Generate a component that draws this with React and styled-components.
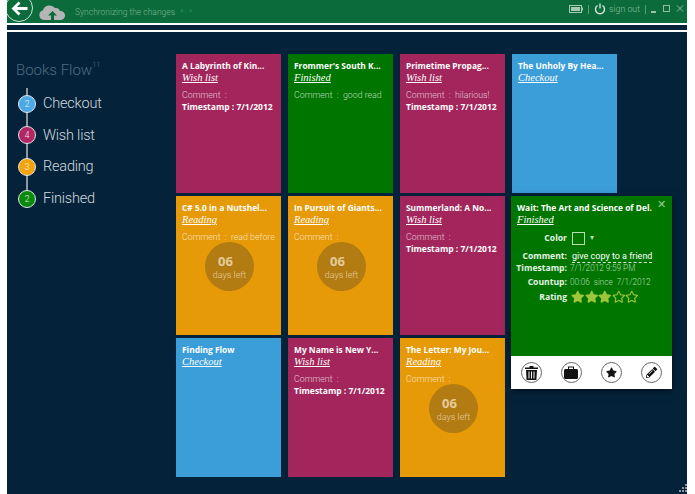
import React from 'react';
import styled, { createGlobalStyle } from 'styled-components';
import { FaStar, FaPencilAlt, FaRegStar } from 'react-icons/fa';

const Global = createGlobalStyle`
  html, body { margin: 0; padding: 0; background: #fff; overflow: hidden; }
  body { font-family: Roboto, "Open Sans", sans-serif; }
`;
const Page = styled.div`
  width: 695px; height: 494px; box-sizing: border-box; padding: 0 8px 0 7px;
  display: flex; flex-direction: column; position: relative; overflow: hidden;
`;
const Top = styled.header`
  height: 23px; background: #0b6b3a; display: flex; align-items: flex-start; flex: none; color: #7fb595; overflow: hidden;
`;
const Back = styled.div`
  width: 26px; height: 26px; border-radius: 50%; border: 1px solid #cfe3d6; margin: -6px 0 0 -2px;
  display: flex; align-items: center; justify-content: center; flex: none;
`;
const Cloud = styled.svg` margin: 5px 0 0 6px; flex: none; `;
const Sync = styled.span`
  font-size: 8.500px; line-height: 14px; margin: 5px 0 0 9px; color: #7db394; font-weight: 300;
`;
const Dots = styled.span` font-size: 10px; line-height: 14px; margin: 5px 0 0 5px; color: #1f8550; letter-spacing: 5px; font-weight: 700; `;
const Spacer = styled.div` flex: 1; `;
const Tray = styled.div` display: flex; align-items: center; height: 18px; flex: none; `;
const SignOut = styled.span` font-size: 8.800px; color: #8ebda2; margin: 0 0 0 3px; font-weight: 300; `;
const Sep = styled.span` width: 1px; height: 9px; background: #5d9c79; margin: 0 5px; `;
const Rule = styled.div` height: 2px; background: #fff; flex: none; `;
const Gap = styled.div` height: 5px; background: #04233b; flex: none; `;
const Body = styled.main`
  flex: 1; background: #04233b; display: flex; position: relative; min-height: 0;
`;
const Side = styled.nav` width: 169px; flex: none; padding: 27px 0 0 9px; box-sizing: border-box; `;
const Title = styled.div`
  font-size: 15px; line-height: 22px; color: #4f6a7f; font-weight: 300;
  sup { font-size: 7.500px; line-height: 0; vertical-align: 8px; }
`;
const Steps = styled.ul`
  list-style: none; margin: 7px 0 0 2px; padding: 0; position: relative;
  &::before { content: ""; position: absolute; left: 8px; top: 0; bottom: 16px; width: 2px; background: #8b98a3; }
`;
const Step = styled.li`
  height: 31.6px; display: flex; align-items: center; gap: 7px; color: #d3d9de; font-size: 14.500px; letter-spacing: -0.2px; font-weight: 300; position: relative;
`;
const Dot = styled.span`
  width: 18px; height: 18px; box-sizing: border-box; border-radius: 50%; background: ${p => p.$c}; border: 1px solid #dfe5e8;
  color: #e8eef2; font-size: 8.500px; letter-spacing: 0; display: flex; align-items: center; justify-content: center; flex: none;
`;
const Grid = styled.section`
  display: grid; grid-template-columns: repeat(4, 105px); grid-auto-rows: 139px; gap: 3px 7px;
  padding: 22px 0 0 0;
`;
const Tile = styled.article`
  background: ${p => p.$c}; padding: 6px; box-sizing: border-box; color: #fff; overflow: hidden; min-width: 0;
`;
const Name = styled.div`
  font-family: "Open Sans", sans-serif; font-size: 8.400px; font-weight: 700; white-space: nowrap; line-height: 12px;
`;
const State = styled.div`
  font-family: "Liberation Serif", serif; font-style: italic; font-size: 10.500px; text-decoration: underline; line-height: 12px;
`;
const Comment = styled.div`
  font-size: 8.800px; line-height: 12px; margin-top: 5px; color: rgba(255,255,255,.72); white-space: pre; overflow: hidden; font-weight: 300;
`;
const Stamp = styled.div` font-family: "Open Sans", sans-serif; font-size: 8.500px; font-weight: 700; line-height: 12px; white-space: nowrap; `;
const Days = styled.div`
  width: 49px; height: 49px; border-radius: 50%; background: #b27c12; margin: -1px 0 0 23px;
  display: flex; flex-direction: column; align-items: center; justify-content: center; color: #e6cb9e;
  b { font-family: "Open Sans", sans-serif; font-size: 13px; line-height: 16px; margin-right: 8px; }
  span { font-size: 9px; line-height: 12px; font-weight: 300; }
`;
const Popup = styled.aside`
  position: absolute; left: 504px; top: 164px; width: 161px; height: 193px; display: flex; flex-direction: column;
  box-shadow: 0 2px 8px rgba(0,0,0,.55); z-index: 2;
`;
const PopMain = styled.div`
  flex: 1; background: #007600; color: #fff; padding: 6px; position: relative; overflow: hidden;
`;
const Close = styled.span` position: absolute; right: 6px; top: 3px; font-size: 11px; line-height: 12px; color: #9fc99f; `;
const Fields = styled.dl`
  margin: 0; display: grid; grid-template-columns: 50px 1fr; column-gap: 3px; align-items: center;
  grid-template-rows: 24px 12px 12px 16px 14px;
`;
const Key = styled.dt`
  font-family: "Open Sans", sans-serif; font-size: 8.600px; font-weight: 700; justify-self: end; white-space: nowrap; line-height: 12px; color: #e6f2e6;
`;
const Val = styled.dd`
  margin: 0; font-size: 8.200px; line-height: 12px; white-space: nowrap; color: #b5d8b5; font-weight: 300;
`;
const Editable = styled.span`
  color: #fff; font-size: 9px; font-weight: 400; line-height: 11px; display: inline-block; margin-left: 2px; border-bottom: 1px dashed #cfe6cf;
`;
const Swatch = styled.span`
  display: inline-block; width: 11px; height: 11px; border: 1px solid #b9dcb9; vertical-align: middle; margin: 0 5px 0 2px;
`;
const Stars = styled.span` display: inline-flex; color: #9dc63a; font-size: 13.500px; vertical-align: middle; margin-left: 1px; `;
const Actions = styled.div`
  height: 33px; background: #fff; display: flex; align-items: center; justify-content: space-between; padding: 0 9.500px; flex: none;
`;
const Act = styled.span`
  width: 21px; height: 21px; border-radius: 50%; border: 1px solid #666; box-sizing: border-box; background: #fff;
  display: flex; align-items: center; justify-content: center; color: #111; font-size: 11px;
`;
const Grip = styled.svg` position: absolute; right: 8px; bottom: 2px; `;

const M = '#a2265c', G = '#007600', O = '#e79a07', B = '#3c9ed9';
const tiles = [
  { n: 'A Labyrinth of Kin...', s: 'Wish list', c: M, k: 'Comment  :', t: 1 },
  { n: "Frommer's South K...", s: 'Finished', c: G, k: 'Comment  :  good read' },
  { n: 'Primetime Propag...', s: 'Wish list', c: M, k: 'Comment  :  hilarious!', t: 1 },
  { n: 'The Unholy By Hea...', s: 'Checkout', c: B },
  { n: 'C# 5.0 in a Nutshel...', s: 'Reading', c: O, k: 'Comment  :  read before i', d: 1 },
  { n: 'In Pursuit of Giants...', s: 'Reading', c: O, k: 'Comment  :', d: 1 },
  { n: 'Summerland: A No...', s: 'Wish list', c: M, k: 'Comment  :', t: 1 },
  null,
  { n: 'Finding Flow', s: 'Checkout', c: B },
  { n: 'My Name is New Y...', s: 'Wish list', c: M, k: 'Comment  :', t: 1 },
  { n: 'The Letter: My Jou...', s: 'Reading', c: O, k: 'Comment  :', d: 1 },
];
const steps = [['2', 'Checkout', '#4aa9e6'], ['4', 'Wish list', '#b32664'], ['3', 'Reading', '#f5a30c'], ['2', 'Finished', '#0a8a0a']];

export default function App() {
  return (
    <Page>
      <Global />
      <Top>
        <Back>
          <svg width="17" height="15" viewBox="0 0 17 15" fill="none" stroke="#fff" strokeWidth="2.8"><path d="M16.500 7.500H3M8.500 1.500 2.500 7.500l6 6" /></svg>
        </Back>
        <Cloud width="27" height="15" viewBox="0 0 27 15">
          <path fill="#b5b5b5" d="M5 15a5 5 0 0 1-1-9.800A7 7 0 0 1 16 3a4.500 4.500 0 0 1 5 3 4.500 4.500 0 0 1 1 9z" />
          <path fill="#0b6b3a" d="M13.500 6 18 10.500h-3V15h-3v-4.500H9z" />
        </Cloud>
        <Sync>Synchronizing the changes</Sync>
        <Dots>••</Dots>
        <Spacer />
        <Tray>
          <svg width="14" height="8" viewBox="0 0 14 8"><rect x=".5" y=".5" width="12" height="7" fill="none" stroke="#a5c9b3" /><rect x="2" y="2" width="9" height="4" fill="#a5c9b3" /><rect x="13" y="2.500" width="1" height="3" fill="#a5c9b3" /></svg>
          <Sep />
          <svg width="12" height="12" viewBox="0 0 12 12" fill="none" stroke="#c9e0d2" strokeWidth="1.500"><path d="M3.500 2.500a4.500 4.500 0 1 0 5 0M6 .5v5" /></svg>
          <SignOut>sign out</SignOut>
          <Sep />
          <svg width="36" height="10" viewBox="0 0 36 10" fill="none" stroke="#8ebda2"><path d="M0 8h5" strokeWidth="1.500" stroke="#c9e0d2" /><rect x="12.500" y="1.500" width="6" height="6" /><path d="M26 1.500l6 6m0-6-6 6" /></svg>
        </Tray>
      </Top>
      <Rule />
      <Gap />
      <Rule />
      <Body>
        <Side>
          <Title>Books Flow<sup>11</sup></Title>
          <Steps>
            {steps.map(([n, l, c]) => <Step key={l}><Dot $c={c}>{n}</Dot>{l}</Step>)}
          </Steps>
        </Side>
        <Grid>
          {tiles.map((t, i) => t ? (
            <Tile key={i} $c={t.c}>
              <Name>{t.n}</Name>
              <State>{t.s}</State>
              {t.k && <Comment>{t.k}</Comment>}
              {t.t && <Stamp>Timestamp : 7/1/2012</Stamp>}
              {t.d && <Days><b>06</b><span>days left</span></Days>}
            </Tile>
          ) : <div key={i} />)}
        </Grid>
        <Popup>
          <PopMain>
            <Close>✕</Close>
            <Name>Wait: The Art and Science of Del.</Name>
            <State>Finished</State>
            <Fields>
              <Key>Color</Key><Val><Swatch />▾</Val>
              <Key>Comment:</Key><Val><Editable>give copy to a friend</Editable></Val>
              <Key>Timestamp:</Key><Val>7/1/2012 9:59 PM</Val>
              <Key>Countup:</Key><Val>00:06 &nbsp;since &nbsp;7/1/2012</Val>
              <Key>Rating</Key><Val><Stars><FaStar /><FaStar /><FaStar /><FaRegStar /><FaRegStar /></Stars></Val>
            </Fields>
          </PopMain>
          <Actions>
            <Act>
              <svg width="13" height="14" viewBox="0 0 13 14" fill="#111"><path d="M4.500 0h4v1.500H13V3H0V1.500h4.500z" /><path d="M1 4h11l-.6 10H1.600zM3.500 5.500v7h1v-7zm2.500 0v7h1v-7zm2.500 0v7h1v-7z" fillRule="evenodd" /></svg>
            </Act>
            <Act>
              <svg width="14" height="13" viewBox="0 0 14 13" fill="#111"><path d="M4 3V.5h6V3H9V1.500H5V3z" /><rect x="0" y="3" width="14" height="10" rx="1.500" /></svg>
            </Act>
            <Act><FaStar /></Act>
            <Act><FaPencilAlt /></Act>
          </Actions>
        </Popup>
      </Body>
      <Grip width="8" height="8" viewBox="0 0 8 8" fill="#8b98a3"><rect x="6" y="0" width="2" height="2" /><rect x="3" y="3" width="2" height="2" /><rect x="6" y="3" width="2" height="2" /><rect x="0" y="6" width="2" height="2" /><rect x="3" y="6" width="2" height="2" /><rect x="6" y="6" width="2" height="2" /></Grip>
    </Page>
  );
}
